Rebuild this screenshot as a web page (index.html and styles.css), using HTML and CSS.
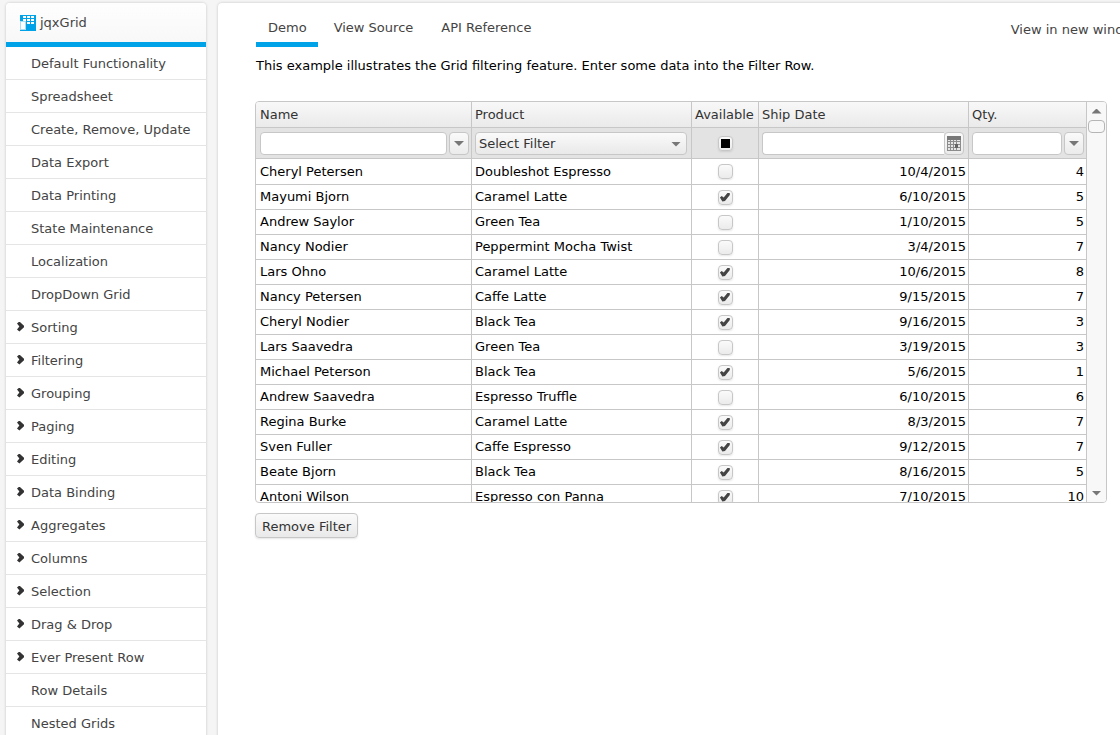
FILE: index.html
```html
<!DOCTYPE html>
<html lang="en">
<head>
<meta charset="utf-8">
<title>jqxGrid - Filter Row</title>
<link rel="stylesheet" href="styles.css">
</head>
<body>
<div class="page">
  <nav class="sidebar" aria-label="Demos">
    <div class="sidebar-title">
      <svg class="logo" width="16" height="16" viewBox="0 0 16 16" shape-rendering="crispEdges" aria-hidden="true">
        <path fill="#00a2e8" d="M0 0h16v16H0z"/>
        <path fill="#fff" d="M3 1h3v2H3zM7 1h3v2H7zM11 1h3v2h-3zM3 4h3v2H3zM7 4h3v2H7zM11 4h3v2h-3zM7 7h3v2H7zM11 7h3v2h-3z"/>
        <path fill="#a6dff6" d="M0 6h6v9H0z"/>
        <path fill="#fff" d="M1 7h4v7H1z"/>
      </svg>
      <span>jqxGrid</span>
    </div>
    <ul class="menu">
      <li><a href="#">Default Functionality</a></li>
      <li><a href="#">Spreadsheet</a></li>
      <li><a href="#">Create, Remove, Update</a></li>
      <li><a href="#">Data Export</a></li>
      <li><a href="#">Data Printing</a></li>
      <li><a href="#">State Maintenance</a></li>
      <li><a href="#">Localization</a></li>
      <li><a href="#">DropDown Grid</a></li>
      <li class="group"><a href="#">Sorting</a></li>
      <li class="group"><a href="#">Filtering</a></li>
      <li class="group"><a href="#">Grouping</a></li>
      <li class="group"><a href="#">Paging</a></li>
      <li class="group"><a href="#">Editing</a></li>
      <li class="group"><a href="#">Data Binding</a></li>
      <li class="group"><a href="#">Aggregates</a></li>
      <li class="group"><a href="#">Columns</a></li>
      <li class="group"><a href="#">Selection</a></li>
      <li class="group"><a href="#">Drag &amp; Drop</a></li>
      <li class="group"><a href="#">Ever Present Row</a></li>
      <li><a href="#">Row Details</a></li>
      <li><a href="#">Nested Grids</a></li>
    </ul>
  </nav>
  <main class="content">
    <header class="topbar">
      <div class="tabs">
        <a class="tab active" href="#">Demo</a>
        <a class="tab" href="#">View Source</a>
        <a class="tab" href="#">API Reference</a>
      </div>
      <a class="new-window" href="#">View in new window</a>
    </header>
    <p class="intro">This example illustrates the Grid filtering feature. Enter some data into the Filter Row.</p>
    <div class="grid">
      <div class="grid-view">
        <table class="grid-table">
          <colgroup><col class="c-name"><col class="c-product"><col class="c-available"><col class="c-date"><col class="c-qty"></colgroup>
          <thead>
            <tr class="titles"><th>Name</th><th>Product</th><th>Available</th><th>Ship Date</th><th>Qty.</th></tr>
            <tr class="filters">
              <td><div class="filter"><input class="field" type="text" aria-label="Filter by name"><button class="drop" type="button" aria-label="Name filter conditions"><i class="arrow down"></i></button></div></td>
              <td><div class="filter pick"><select class="select" aria-label="Filter by product"><option>Select Filter</option></select><i class="arrow down"></i></div></td>
              <td class="mid"><input class="check mixed" type="checkbox" aria-label="Filter by availability"></td>
              <td><div class="filter date"><input class="field" type="text" aria-label="Filter by ship date"><button class="drop cal" type="button" aria-label="Open calendar">
                <svg width="14" height="15" viewBox="0 0 14 15" shape-rendering="crispEdges" aria-hidden="true">
                  <path fill="#777" d="M0 0h14v4H0z"/>
                  <path fill="#e6e6e6" d="M0 4h14v11H0z"/>
                  <path fill="none" stroke="#8c8c8c" d="M0.500 4v11M3.500 4v11M6.500 4v11M9.500 4v11M13.500 4v11M0 5.500h14M0 8.500h14M0 11.500h14M0 14.500h14"/>
                  <path fill="#666" d="M8 8h3v4H8z"/>
                </svg></button></div></td>
              <td><div class="filter"><input class="field" type="text" aria-label="Filter by quantity"><button class="drop" type="button" aria-label="Quantity filter conditions"><i class="arrow down"></i></button></div></td>
            </tr>
          </thead>
          <tbody>
            <tr><td>Cheryl Petersen</td><td>Doubleshot Espresso</td><td class="mid"><input class="check" type="checkbox" aria-label="Available"></td><td class="num">10/4/2015</td><td class="num">4</td></tr>
            <tr><td>Mayumi Bjorn</td><td>Caramel Latte</td><td class="mid"><input class="check" type="checkbox" aria-label="Available" checked></td><td class="num">6/10/2015</td><td class="num">5</td></tr>
            <tr><td>Andrew Saylor</td><td>Green Tea</td><td class="mid"><input class="check" type="checkbox" aria-label="Available"></td><td class="num">1/10/2015</td><td class="num">5</td></tr>
            <tr><td>Nancy Nodier</td><td>Peppermint Mocha Twist</td><td class="mid"><input class="check" type="checkbox" aria-label="Available"></td><td class="num">3/4/2015</td><td class="num">7</td></tr>
            <tr><td>Lars Ohno</td><td>Caramel Latte</td><td class="mid"><input class="check" type="checkbox" aria-label="Available" checked></td><td class="num">10/6/2015</td><td class="num">8</td></tr>
            <tr><td>Nancy Petersen</td><td>Caffe Latte</td><td class="mid"><input class="check" type="checkbox" aria-label="Available" checked></td><td class="num">9/15/2015</td><td class="num">7</td></tr>
            <tr><td>Cheryl Nodier</td><td>Black Tea</td><td class="mid"><input class="check" type="checkbox" aria-label="Available" checked></td><td class="num">9/16/2015</td><td class="num">3</td></tr>
            <tr><td>Lars Saavedra</td><td>Green Tea</td><td class="mid"><input class="check" type="checkbox" aria-label="Available"></td><td class="num">3/19/2015</td><td class="num">3</td></tr>
            <tr><td>Michael Peterson</td><td>Black Tea</td><td class="mid"><input class="check" type="checkbox" aria-label="Available" checked></td><td class="num">5/6/2015</td><td class="num">1</td></tr>
            <tr><td>Andrew Saavedra</td><td>Espresso Truffle</td><td class="mid"><input class="check" type="checkbox" aria-label="Available"></td><td class="num">6/10/2015</td><td class="num">6</td></tr>
            <tr><td>Regina Burke</td><td>Caramel Latte</td><td class="mid"><input class="check" type="checkbox" aria-label="Available" checked></td><td class="num">8/3/2015</td><td class="num">7</td></tr>
            <tr><td>Sven Fuller</td><td>Caffe Espresso</td><td class="mid"><input class="check" type="checkbox" aria-label="Available" checked></td><td class="num">9/12/2015</td><td class="num">7</td></tr>
            <tr><td>Beate Bjorn</td><td>Black Tea</td><td class="mid"><input class="check" type="checkbox" aria-label="Available" checked></td><td class="num">8/16/2015</td><td class="num">5</td></tr>
            <tr><td>Antoni Wilson</td><td>Espresso con Panna</td><td class="mid"><input class="check" type="checkbox" aria-label="Available" checked></td><td class="num">7/10/2015</td><td class="num">10</td></tr>
          </tbody>
        </table>
      </div>
      <div class="scrollbar">
        <button class="scroll-btn" type="button" aria-label="Scroll up"><i class="arrow up"></i></button>
        <div class="thumb"></div>
        <button class="scroll-btn last" type="button" aria-label="Scroll down"><i class="arrow down"></i></button>
      </div>
    </div>
    <button class="button" type="button">Remove Filter</button>
  </main>
</div>
</body>
</html>
```

FILE: styles.css
```css
* { box-sizing: border-box; }

body {
  margin: 0;
  height: 100vh;
  overflow: hidden;
  background: #f5f5f5;
  color: #000;
  font: 13px/16px Verdana, "DejaVu Sans", sans-serif;
}

a { color: #444; text-decoration: none; }

input, button, select { font: inherit; margin: 0; }

.page {
  display: flex;
  align-items: flex-start;
  gap: 12px;
  padding: 3px 0 0 6px;
}

/* Sidebar */
.sidebar {
  flex: 0 0 200px;
  background: #fff;
  border-radius: 4px 4px 0 0;
  box-shadow: 0 0 3px rgba(0, 0, 0, 0.2);
}

.sidebar-title {
  display: flex;
  align-items: center;
  gap: 4px;
  height: 44px;
  padding-left: 14px;
  border-bottom: 5px solid #00a2e8;
  border-radius: 4px 4px 0 0;
  background: linear-gradient(#fefefe, #f8f8f8);
  color: #444;
}

.logo { display: block; margin-top: 1px; }

.menu { list-style: none; margin: 0; padding: 0; }

.menu li {
  display: flex;
  align-items: center;
  height: 33px;
  padding: 2px 0 0 11px;
  border-bottom: 1px solid #e5e5e5;
}

.menu li::before {
  content: "";
  width: 7px;
  height: 10px;
  margin: 0 7px 3px 0;
}

.menu .group::before {
  background: #333;
  clip-path: polygon(0 20%, 34% 0, 100% 42%, 100% 58%, 34% 100%, 0 80%, 34% 50%);
}

/* Content */
.content {
  flex: 1 0 940px;
  min-height: 100vh;
  padding: 0 16px 20px 37px;
  background: #fff;
  border-radius: 4px 4px 0 0;
  box-shadow: 0 0 3px rgba(0, 0, 0, 0.2);
}

.topbar {
  display: flex;
  justify-content: space-between;
  height: 44px;
  padding-left: 1px;
}

.tabs { display: flex; gap: 4px; }

.tab {
  padding: 17px 12px 0;
  border-bottom: 5px solid transparent;
}

.active { padding-right: 11px; border-color: #00a2e8; }

.new-window { padding-top: 19px; white-space: nowrap; }

.intro { margin: 11px 0 27px 1px; }

/* Grid */
.grid {
  display: flex;
  width: 100%;
  max-width: 852px;
  height: 402px;
  overflow: hidden;
  border: 1px solid #c7c7c7;
  border-radius: 4px;
}

.grid-view { flex: 1; overflow: hidden; }

.grid-table {
  width: 100%;
  table-layout: fixed;
  border-collapse: separate;
  border-spacing: 0;
}

.c-name { width: 216px; }
.c-product { width: 220px; }
.c-available { width: 67px; }
.c-date { width: 210px; }
.c-qty { width: 118px; }

.grid-table th,
.grid-table td {
  height: 25px;
  padding: 0 2px 1px 4px;
  border: solid #c7c7c7;
  border-width: 0 1px 1px 0;
  text-align: left;
  font-weight: normal;
  white-space: nowrap;
}

.grid-table th + th,
.grid-table td + td { padding-left: 3px; }

.grid-table th {
  height: 26px;
  padding-top: 1px;
  padding-bottom: 0;
  background: linear-gradient(#f8f8f8, #eaeaea);
  color: #333;
}

.grid-table .filters td {
  height: 31px;
  padding-bottom: 0;
  background: #e3e3e3;
}

.grid-table tbody tr:first-child td { height: 26px; padding-bottom: 0; }

.grid-table .num { text-align: right; }

.grid-table .mid { padding: 0; text-align: center; line-height: 14px; }

.filter { display: flex; gap: 2px; position: relative; }

.field {
  flex: 1;
  min-width: 0;
  height: 23px;
  padding: 0 3px;
  background: #fff;
  border: 1px solid #c7c7c7;
  border-radius: 4px;
}

.drop {
  display: flex;
  align-items: center;
  justify-content: center;
  width: 20px;
  height: 23px;
  padding: 1px 0 0;
  background: linear-gradient(#fafafa, #ebebeb);
  border: 1px solid #c7c7c7;
  border-radius: 4px;
}

.date { gap: 0; padding-right: 2px; }
.date .field { border-right: 0; border-radius: 4px 0 0 4px; }

.pick { padding-right: 2px; }

.select {
  flex: 1;
  height: 23px;
  padding: 1px 3px 0;
  appearance: none;
  background: linear-gradient(#fafafa, #e9e9e9);
  border: 1px solid #c7c7c7;
  border-radius: 4px;
  color: #333;
}

.pick .arrow {
  position: absolute;
  right: 8px;
  top: 10px;
  pointer-events: none;
}

.arrow {
  width: 10px;
  height: 5px;
  background: #777;
}

.down { clip-path: polygon(0 0, 100% 0, 50% 100%); }
.up { clip-path: polygon(50% 0, 100% 100%, 0 100%); }

.check {
  display: inline-flex;
  align-items: center;
  justify-content: center;
  width: 15px;
  height: 15px;
  vertical-align: middle;
  appearance: none;
  background: linear-gradient(#fafafa, #ebebeb);
  border: 1px solid #c7c7c7;
  border-radius: 4px;
  box-shadow: 0 1px 2px rgba(0, 0, 0, 0.1);
}

.check:checked::before {
  content: "";
  width: 11px;
  height: 9px;
  background: #444;
  clip-path: polygon(4% 56%, 20% 40%, 38% 56%, 76% 0, 96% 10%, 92% 30%, 50% 94%, 26% 100%);
}

.mixed::before {
  content: "";
  width: 9px;
  height: 9px;
  background: #000;
}

/* Scroll bar */
.scrollbar {
  display: flex;
  flex-direction: column;
  flex: 0 0 19px;
  align-items: center;
  background: #f8f8f8;
}

.scroll-btn {
  display: flex;
  align-items: center;
  justify-content: center;
  width: 17px;
  height: 18px;
  padding: 0;
  background: none;
  border: 0;
}

.last { margin-top: auto; }

.thumb {
  width: 17px;
  height: 13px;
  background: #f8f8f8;
  border: 1px solid #b5b5b5;
  border-radius: 4px;
}

.button {
  height: 25px;
  margin-top: 10px;
  padding: 2px 6px 0;
  background: linear-gradient(#fafafa, #e9e9e9);
  border: 1px solid #c7c7c7;
  border-radius: 4px;
  box-shadow: 0 1px 2px rgba(0, 0, 0, 0.1);
  color: #333;
}
```
